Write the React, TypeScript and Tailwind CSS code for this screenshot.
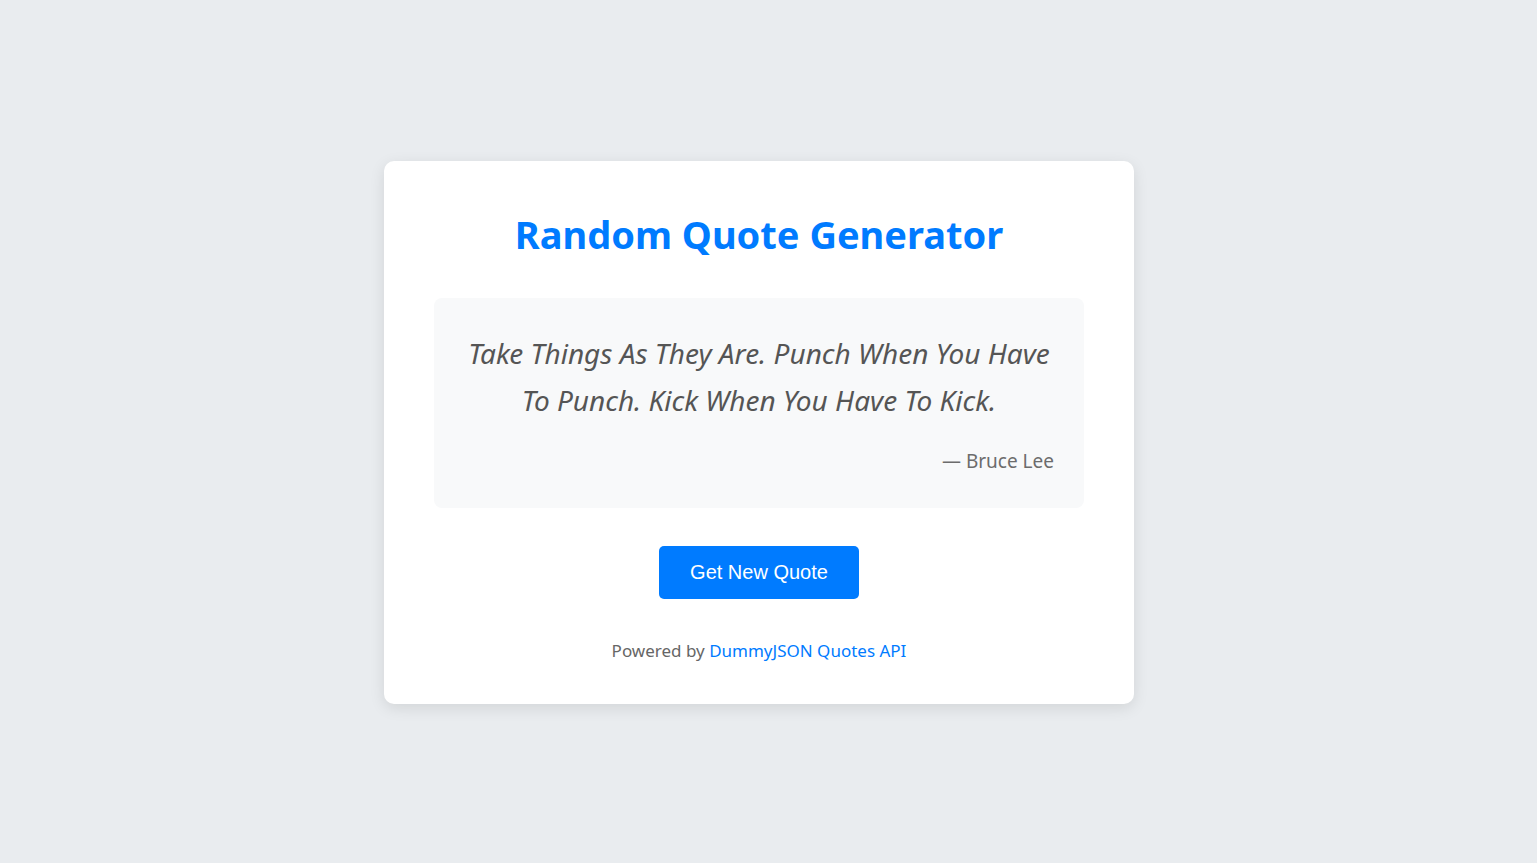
import React from "react";

export default function App() {
  return (
    <div className="min-h-screen w-full bg-[#e9ecef] flex items-center justify-center pr-[19px] pt-[2px]" style={{ fontFamily: '"Noto Sans", "Open Sans", sans-serif' }}>
      <div className="w-[750px] bg-white rounded-[10px] shadow-[0_4px_15px_rgba(0,0,0,0.1)] px-[50px] pt-[49px] pb-[41px] text-center">
        <h1 className="text-[38px] leading-[48px] font-bold text-[#007bff] mb-[40px]">Random Quote Generator</h1>
        <div className="bg-[#f8f9fa] rounded-[8px] px-[30px] pt-[32px] pb-[33px]">
          <p className="text-[28px] leading-[47px] italic text-[#555]">
            Take Things As They Are. Punch When You Have To Punch. Kick When You Have To Kick.
          </p>
          <p className="text-right text-[19px] leading-[27px] text-[#6c6c6c] mt-[24px]">— Bruce Lee</p>
        </div>
        <button className="mt-[38px] bg-[#007bff] text-white rounded-[5px] px-[31px] py-[15px] text-[20px] leading-[23px]" style={{ fontFamily: '"Liberation Sans", Arial, sans-serif' }}>
          Get New Quote
        </button>
        <p className="mt-[40px] text-[17px] leading-[24px] text-[#666]">
          Powered by <a className="text-[#007bff]">DummyJSON Quotes API</a>
        </p>
      </div>
    </div>
  );
}
